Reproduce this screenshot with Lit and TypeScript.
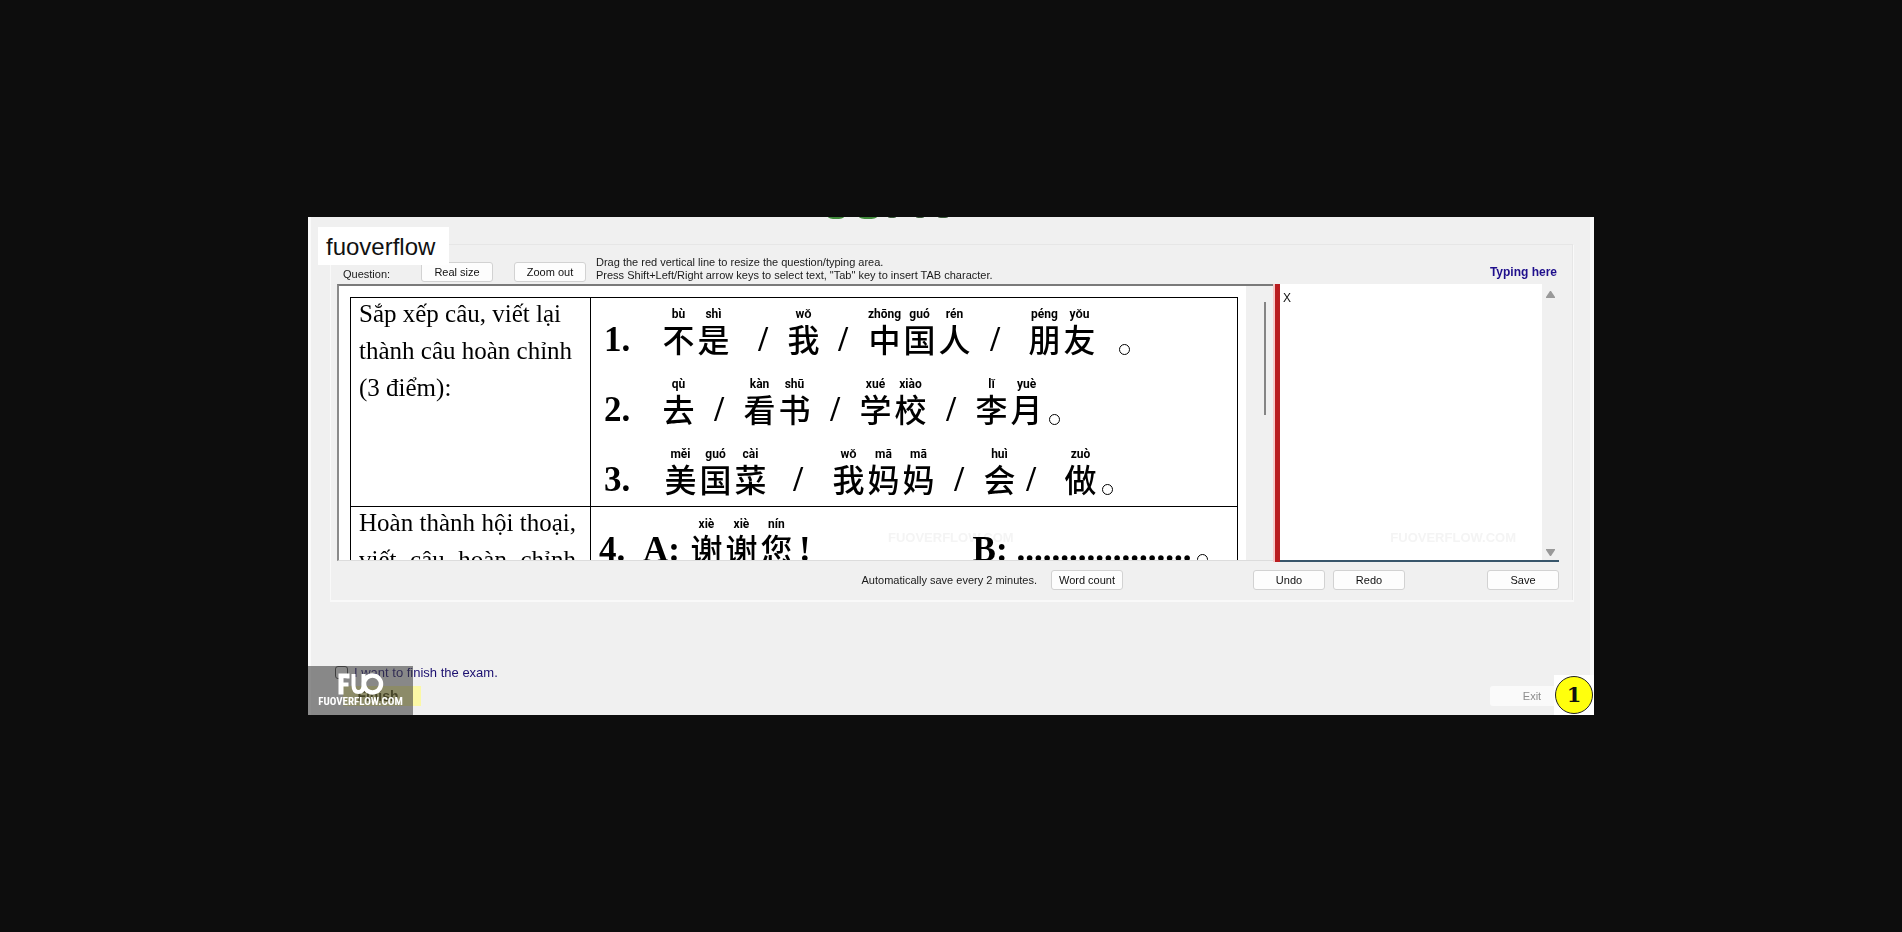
import { LitElement, html, css, svg } from "lit";
import { customElement } from "lit/decorators.js";

type Token = { text: string; kind: "hanzi" | "slash" | "stop" | "latin"; pinyin?: string; gap: number };

const h = (text: string, pinyin: string, gap = 0): Token => ({ text, pinyin, gap, kind: "hanzi" });
const slash = (gap: number): Token => ({ text: "/", gap, kind: "slash" });
const stop = (gap: number): Token => ({ text: "。", gap, kind: "stop" });
const latin = (text: string, gap: number): Token => ({ text, gap, kind: "latin" });

const ORDERING: { no: string; tokens: Token[] }[] = [
  {
    no: "1.",
    tokens: [h("不", "bù"), h("是", "shì"), slash(27), h("我", "wǒ", 18), slash(17), h("中", "zhōng", 19), h("国", "guó"), h("人", "rén"), slash(18), h("朋", "péng", 27), h("友", "yǒu"), stop(20)],
  },
  {
    no: "2.",
    tokens: [h("去", "qù"), slash(18), h("看", "kàn", 18), h("书", "shū"), slash(18), h("学", "xué", 18), h("校", "xiào"), slash(18), h("李", "lǐ", 18), h("月", "yuè"), stop(3)],
  },
  {
    no: "3.",
    tokens: [h("美", "měi", 2), h("国", "guó"), h("菜", "cài"), slash(25), h("我", "wǒ", 28), h("妈", "mā"), h("妈", "mā"), slash(18), h("会", "huì", 18), slash(9), h("做", "zuò", 27), stop(2)],
  },
];

const DIALOGUE: Token[] = [
  latin("A:", 18), h("谢", "xiè", 9), h("谢", "xiè"), h("您", "nín"), latin("!", 5), latin("B:", 162), latin("....................", 9), stop(4),
];

@customElement("exam-line")
class ExamLine extends LitElement {
  static properties = { no: { type: String }, tokens: { attribute: false } };
  declare no: string;
  declare tokens: Token[];

  static styles = css`
    :host { display: flex; align-items: flex-end; height: 70px; font: bold 35px/42px "Liberation Serif", serif; white-space: nowrap; }
    .no { box-sizing: border-box; width: 57px; flex: none; }
    .no.tight { width: 26px; }
    .token { flex: none; text-align: center; }
    .slash { width: 10px; }
    .hanzi { width: 35px; display: flex; flex-direction: column; align-items: center; }
    .pinyin { font: bold 12px/15px Roboto, "Liberation Sans", sans-serif; }
    .char { font: 500 32px/32px "Noto Sans CJK SC", sans-serif; height: 39px; }
    .stop { width: 14px; height: 40px; display: flex; align-items: flex-end; justify-content: center; }
    .ring { box-sizing: border-box; width: 11px; height: 11px; margin-bottom: 6px; border: 1px solid #000; border-radius: 50%; }
  `;

  renderToken(t: Token) {
    const gap = `margin-left:${t.gap}px`;
    if (t.kind === "hanzi")
      return html`<span class="token hanzi" style=${gap}><span class="pinyin">${t.pinyin}</span><span class="char" lang="zh">${t.text}</span></span>`;
    if (t.kind === "stop") return html`<span class="token stop" role="img" aria-label="full stop" style=${gap}><span class="ring"></span></span>`;
    return html`<span class="token ${t.kind}" style=${gap}>${t.text}</span>`;
  }

  render() {
    return html`<span class="no ${this.no === "4." ? "tight" : ""}">${this.no}</span>${this.tokens.map((t) => this.renderToken(t))}`;
  }
}

@customElement("app-root")
class AppRoot extends LitElement {
  static styles = css`
    :host { display: flex; align-items: center; justify-content: center; min-height: 100vh; background: #0d0d0d; font: 11px/13px "Liberation Sans", sans-serif; color: #1a1a1a; }
    .window { position: relative; overflow: hidden; box-sizing: border-box; width: 100%; max-width: 1286px; padding: 27px 20px 9px 22px; background: #f0f0f0; box-shadow: inset 3px 0 #fafafa, inset -4px 0 #fafafa; }
    .heading { position: absolute; top: 0; left: 520px; }
    .tag { position: absolute; top: 10px; left: 10px; padding: 2px 14px 0 8px; background: #fff; color: #111; font-size: 24px; line-height: 36px; }
    .group { border: 1px solid #f9f9f9; border-top-color: #e6e6e6; border-bottom-width: 2px; padding: 0 14px 0 6px; box-shadow: inset -1px 0 #e6e6e6; }
    .toolbar { display: flex; align-items: flex-end; padding: 11px 0 2px 6px; }
    .label { width: 78px; padding-bottom: 1px; }
    .btn { box-sizing: border-box; width: 72px; height: 20px; padding: 0; border: 1px solid #d2d2d2; border-radius: 3px; background: #fdfdfd; color: #111; font: inherit; text-align: center; }
    .toolbar .btn + .btn { margin-left: 21px; }
    .hint { margin: 0 0 0 10px; white-space: pre-line; }
    .typing-label { margin-left: auto; padding: 0 2px 3px 0; color: #1f0f8c; font-weight: bold; font-size: 12px; }
    .panes { display: flex; height: 278px; }
    .question { flex: 1; min-width: 0; height: 277px; box-sizing: border-box; display: flex; overflow: hidden; border-top: 2px solid #7a7a7a; border-left: 2px solid #8a8a8a; border-bottom: 1px solid #dcdcdc; }
    .paper { flex: 1; min-width: 0; padding: 11px 8px 0 11px; background: #fff; overflow: hidden; }
    .sheet { width: 100%; border-collapse: collapse; table-layout: fixed; color: #000; }
    .sheet td { border: 1px solid #000; padding: 0; vertical-align: top; }
    .side { width: 240px; }
    .sheet .topic { padding: 0 14px 0 8px; font: 25px/37px "Liberation Serif", serif; }
    .spread { display: block; text-align-last: justify; }
    .topic-lines { margin-top: -3px; }
    .lines { padding: 0 0 0 13px; height: 208px; }
    .lines.second { padding-left: 8px; }
    .lines exam-line:first-child { height: 63px; }
    .lines.second exam-line:first-child { height: 64px; }
    .track { width: 27px; display: flex; justify-content: flex-end; background: #f0f0f0; }
    .thumb { width: 2px; height: 113px; margin: 16px 7px 0 0; background: #858585; }
    .splitter { width: 5px; background: #b91d20; border-left: 2px solid #f7c9c9; }
    .typing { display: flex; width: 279px; border-bottom: 2px solid #38566b; background: #fff; }
    .answer { flex: 1; min-width: 0; border: 0; padding: 7px 3px; margin: 0; resize: none; outline: 0; overflow: hidden; background: #fff; color: #111; font: 12px/14px "Liberation Sans", sans-serif; }
    .scroll { width: 17px; display: flex; flex-direction: column; justify-content: space-between; align-items: center; padding: 7px 0 4px; box-sizing: border-box; background: #f0f0f0; }
    .arrow { display: block; }
    .footer { display: flex; align-items: center; padding: 8px 0 10px; }
    .autosave { margin-left: auto; }
    .count { margin-left: 14px; }
    .undo { margin-left: 130px; }
    .redo { margin-left: 8px; }
    .save { margin-left: 82px; }
    .finish-row { display: flex; align-items: center; gap: 6px; padding: 62px 0 0 5px; color: #1c1070; font-size: 13px; line-height: 17px; }
    .tick { appearance: none; box-sizing: border-box; width: 13px; height: 13px; margin: 0; border: 1px solid #444; border-radius: 3px; background: #f6f6f6; }
    .actions { display: flex; justify-content: space-between; padding: 5px 0 0 13px; }
    .finish { width: 78px; padding-right: 8px; border: 0; border-radius: 0; background: #fbf8a5; color: #55510f; font-size: 14px; font-weight: bold; line-height: 20px; }
    .exit { width: 84px; border: 0; background: #fafafa; color: #8c8c8c; }
    .logo { position: absolute; left: 0; bottom: 0; width: 105px; height: 49px; background: rgba(60, 60, 60, 0.58); color: #fff; text-align: center; }
    .mark { display: block; margin: 7px auto 0; }
    .site { display: block; font: bold 11px/14px "Liberation Sans Narrow", "Roboto Condensed", "Open Sans Condensed", "Liberation Sans", sans-serif; }
    .badge-box { position: absolute; right: 0; bottom: 0; width: 40px; height: 40px; display: flex; align-items: center; justify-content: center; background: #fff; }
    .badge { box-sizing: border-box; width: 38px; height: 38px; border: 1px solid #222; border-radius: 50%; background: #ffff0d; color: #111; font: bold 21px/36px "DejaVu Serif", serif; text-align: center; }
    .ghost { position: absolute; bottom: 169px; color: #f4f4f4; font: bold 13px/16px "Liberation Sans", sans-serif; pointer-events: none; mix-blend-mode: multiply; }
    .ghost.center { left: 580px; }
    .ghost.right { right: 78px; }
  `;

  render() {
    return html`
      <main class="window">
        <svg class="heading" width="130" height="3" viewBox="0 0 130 3" aria-hidden="true">
          ${[[8, 8, "#3f8a3a"], [40, 9, "#3f8a3a"], [64, 4, "#3a5a3a"], [92, 4, "#3a5a3a"], [115, 5, "#3a5a3a"]].map(
            ([cx, rx, fill]) => svg`<ellipse cx=${cx} cy="0" rx=${rx} ry=${rx > 6 ? 2 : 1} fill=${fill}></ellipse>`
          )}
        </svg>
        <section class="group">
          <div class="toolbar">
            <span class="label">Question:</span>
            <button class="btn">Real size</button>
            <button class="btn">Zoom out</button>
            <p class="hint">Drag the red vertical line to resize the question/typing area.
Press Shift+Left/Right arrow keys to select text, "Tab" key to insert TAB character.</p>
            <label class="typing-label" for="answer">Typing here</label>
          </div>
          <div class="panes">
            <div class="question">
              <div class="paper">
                <table class="sheet">
                  <colgroup><col class="side" /><col /></colgroup>
                  <tbody>
                    <tr>
                      <td class="topic"><div class="topic-lines">Sắp xếp câu, viết lại thành câu hoàn chỉnh (3 điểm):</div></td>
                      <td><div class="lines">${ORDERING.map((r) => html`<exam-line .no=${r.no} .tokens=${r.tokens}></exam-line>`)}</div></td>
                    </tr>
                    <tr>
                      <td class="topic"><div class="topic-lines"><span class="spread">Hoàn thành hội thoại,</span><span class="spread">viết câu hoàn chỉnh</span></div></td>
                      <td><div class="lines second"><exam-line .no=${"4."} .tokens=${DIALOGUE}></exam-line></div></td>
                    </tr>
                  </tbody>
                </table>
              </div>
              <div class="track"><div class="thumb"></div></div>
            </div>
            <div class="splitter"></div>
            <div class="typing">
              <textarea class="answer" id="answer" .value=${"X"}></textarea>
              <div class="scroll" aria-hidden="true">
                <svg class="arrow" width="9" height="7" viewBox="0 0 9 7"><path d="M4 0H5L9 6V7H0V6Z" fill="#999" /></svg>
                <svg class="arrow" width="9" height="7" viewBox="0 0 9 7"><path d="M0 0H9V1L5 7H4L0 1Z" fill="#999" /></svg>
              </div>
            </div>
          </div>
          <div class="footer">
            <span class="autosave">Automatically save every 2 minutes.</span>
            <button class="btn count">Word count</button>
            <button class="btn undo">Undo</button>
            <button class="btn redo">Redo</button>
            <button class="btn save">Save</button>
          </div>
        </section>
        <div class="finish-row">
          <input class="tick" type="checkbox" id="finish" />
          <label for="finish">I want to finish the exam.</label>
        </div>
        <div class="actions">
          <button class="btn finish">Finish</button>
          <button class="btn exit">Exit</button>
        </div>
        <span class="ghost center" aria-hidden="true">FUOVERFLOW.COM</span>
        <span class="ghost right" aria-hidden="true">FUOVERFLOW.COM</span>
        <div class="tag">fuoverflow</div>
        <div class="logo">
          <svg class="mark" width="46" height="22" viewBox="0 0 46 22" role="img" aria-label="FUO" fill="none" stroke="#fff" stroke-width="4">
            <path d="M3 21.5V3H11.5" stroke-width="5" />
            <path d="M4 11.5H10.5" />
            <path d="M15.5 1V12C15.5 17 17.5 19 20.5 19C23.5 19 25.5 17 25.5 12V1" />
            <circle cx="34.5" cy="11" r="8.5" stroke-width="4.5" />
          </svg>
          <span class="site">FUOVERFLOW.COM</span>
        </div>
        <div class="badge-box"><div class="badge">1</div></div>
      </main>
    `;
  }
}
